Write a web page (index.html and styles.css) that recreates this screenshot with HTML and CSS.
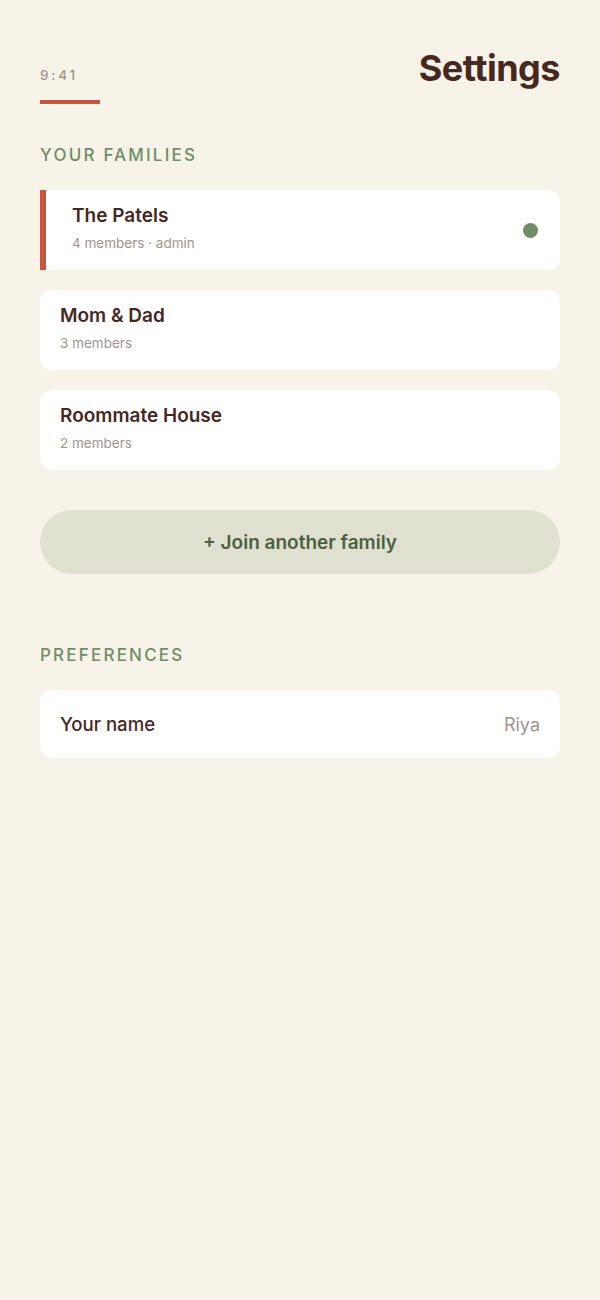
FILE: index.html
```html
<!DOCTYPE html>
<html lang="en">
<head>
  <meta charset="UTF-8">
  <title>Settings</title>
  <link rel="stylesheet" href="styles.css">
</head>
<body>
  <div class="screen">
    <header class="top">
      <div class="clock">
        <span class="time">9:41</span>
        <span class="accent"></span>
      </div>
      <h1>Settings</h1>
    </header>

    <h3 class="section-label">Your families</h3>
    <div class="family-list">
      <div class="family active">
        <div class="family-info">
          <div class="family-name">The Patels</div>
          <div class="family-meta">4 members · admin</div>
        </div>
        <span class="dot"></span>
      </div>
      <div class="family">
        <div class="family-info">
          <div class="family-name">Mom &amp; Dad</div>
          <div class="family-meta">3 members</div>
        </div>
      </div>
      <div class="family">
        <div class="family-info">
          <div class="family-name">Roommate House</div>
          <div class="family-meta">2 members</div>
        </div>
      </div>
    </div>

    <button class="join">+ Join another family</button>

    <h3 class="section-label prefs">Preferences</h3>
    <div class="pref-row">
      <span class="pref-label">Your name</span>
      <span class="pref-value">Riya</span>
    </div>
  </div>
</body>
</html>
```

FILE: styles.css
```css
body {
  margin: 0;
  background: #f7f3e9;
  font-family: 'Inter', 'Noto Sans', sans-serif;
  color: #46281f;
}

.screen {
  padding: 46px 40px 40px;
}

.top {
  display: flex;
  justify-content: space-between;
  align-items: flex-start;
}

.clock {
  display: flex;
  flex-direction: column;
  padding-top: 21px;
}

.time {
  font-size: 13.5px;
  font-weight: 500;
  letter-spacing: 2.8px;
  color: #a3938b;
}

.accent {
  display: block;
  width: 60px;
  height: 4px;
  background: #c9573f;
  margin-top: 17px;
}

h1 {
  margin: 0;
  font-size: 36px;
  font-weight: 700;
  letter-spacing: -0.5px;
  color: #46281f;
}

.section-label {
  margin: 41px 0 25px;
  font-size: 17px;
  font-weight: 500;
  letter-spacing: 2.2px;
  text-transform: uppercase;
  color: #718c66;
}

.family-list {
  display: flex;
  flex-direction: column;
  gap: 20px;
}

.family {
  display: flex;
  align-items: flex-start;
  justify-content: space-between;
  height: 80px;
  box-sizing: border-box;
  padding: 14px 22px 0 20px;
  background: #ffffff;
  border-radius: 12px;
}

.family.active {
  border-left: 6px solid #c9573f;
  border-radius: 0 12px 12px 0;
  padding-left: 26px;
}

.family-name {
  font-size: 19px;
  line-height: 24px;
  font-weight: 600;
  color: #46281f;
}

.family-meta {
  margin-top: 7px;
  font-size: 13.5px;
  line-height: 16px;
  color: #a3938b;
}

.dot {
  width: 15px;
  height: 15px;
  margin-top: 19px;
  border-radius: 50%;
  background: #718c66;
}

.join {
  display: block;
  width: 100%;
  height: 64px;
  margin-top: 40px;
  border: none;
  border-radius: 32px;
  background: #e0e0d0;
  font-family: inherit;
  font-size: 19px;
  font-weight: 600;
  color: #4b5f42;
  cursor: pointer;
}

.section-label.prefs {
  margin-top: 71px;
}

.pref-row {
  display: flex;
  align-items: center;
  justify-content: space-between;
  height: 68px;
  box-sizing: border-box;
  padding: 0 20px;
  background: #ffffff;
  border-radius: 12px;
  font-size: 18px;
}

.pref-label {
  font-size: 18.6px;
  font-weight: 500;
  color: #46281f;
}

.pref-value {
  color: #a3938b;
}
```
